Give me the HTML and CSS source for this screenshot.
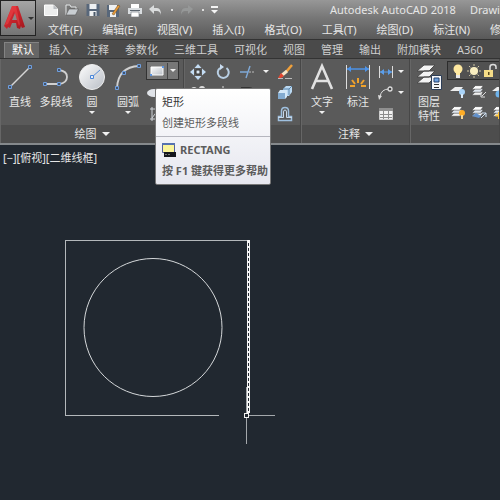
FILE: index.html
```html
<!DOCTYPE html>
<html lang="zh-CN">
<head>
<meta charset="utf-8">
<title>Autodesk AutoCAD 2018</title>
<link rel="stylesheet" href="styles.css">
</head>
<body>
<svg class="defs" aria-hidden="true">
  <defs>
    <linearGradient id="ball" x1="0" y1="0" x2="1" y2="1"><stop offset="0" stop-color="#fdfdfd"/><stop offset="1" stop-color="#b9bec6"/></linearGradient>
    <linearGradient id="red" x1="0" y1="0" x2="1" y2="1"><stop offset="0" stop-color="#e8333a"/><stop offset="1" stop-color="#a3161d"/></linearGradient>
    <symbol id="sheets" viewBox="0 0 16 16">
      <path d="M5 10h9l-3 4H1z" fill="#f2f2f2" stroke="#444" stroke-width=".6"/>
      <path d="M5 6.500h9l-3 4H1z" fill="#dfe6ef" stroke="#444" stroke-width=".6"/>
      <path d="M5 3h9l-3 4H1z" fill="#fff" stroke="#444" stroke-width=".6"/>
    </symbol>
  </defs>
</svg>
<header class="titlebar">
  <button class="app" aria-label="应用程序菜单">
    <svg width="22" height="26" viewBox="0 0 22 26"><path d="M8 1h6l7 21-3 1-1-2-1 3-3-1-1-5H8l-2 5-2-1-1 2-3-3z" fill="url(#red)"/><path d="M8 1L1 20l3-1L10 6l5 15 1-2-4-18z" fill="#f0454a" opacity=".5"/><path d="M11 8l-3 7h5z" fill="#8f8585"/></svg>
    <i class="caret dark"></i>
  </button>
  <div class="bars">
    <div class="quick">
      <button aria-label="新建"><svg width="14" height="12" viewBox="0 0 14 12"><path d="M.500 1h9l4 4v6.500H.500z" fill="#eceded" stroke="#fff"/><path d="M9.500 1v4h4" fill="#b8bcc0"/></svg></button>
      <button aria-label="打开"><svg width="14" height="12" viewBox="0 0 14 12"><path d="M1 11V1h4l1 2h5v2" fill="#777" stroke="#e4e7e8"/><path d="M1 11l3-6h9.500l-3 6z" fill="#c9ced2" stroke="#555" stroke-width=".6"/></svg></button>
      <button aria-label="保存"><svg width="14" height="12" viewBox="0 0 13 12"><path d="M0 0h13v12H0z" fill="#58677a"/><path d="M3 0h7v5H3zM3 7h7v5H3z" fill="#eef0f2"/><path d="M7 8h2v4H7z" fill="#4b5868"/></svg></button>
      <button aria-label="另存为"><svg width="14" height="13" viewBox="0 0 14 13"><path d="M0 1h12v12H0z" fill="#58677a"/><path d="M2 1h8v5H2zM3 8h6v5H3z" fill="#eef0f2"/><path d="M5 10l6-9 2 1-6 9z" fill="#e79a3a" stroke="#6b4a20" stroke-width=".5"/></svg></button>
      <button aria-label="打印"><svg width="14" height="13" viewBox="0 0 14 13"><path d="M3 0h8v4H3z" fill="#fff"/><path d="M0 4h14v6H0z" fill="#d9dde0"/><path d="M2 6h10v1H2z" fill="#5b646e"/><path d="M3 8h8v5H3z" fill="#fff" stroke="#7b838b" stroke-width=".7"/></svg></button>
      <button aria-label="放弃"><svg width="13" height="11" viewBox="0 0 13 11"><path d="M0 4l5-4v3h3q4 0 4 7-1-4-4-4H5v3z" fill="#dadcdd"/></svg><i class="dot"></i></button>
      <button aria-label="重做"><svg width="13" height="11" viewBox="0 0 13 11"><path d="M13 4L8 0v3H5Q1 3 1 10q1-4 4-4h3v3z" fill="#969898"/></svg><i class="dot"></i></button>
      <button aria-label="自定义"><svg width="7" height="8" viewBox="0 0 7 8"><path d="M0 0h7v2H0zM0 4h7L3.500 7.500z" fill="#f4f4f4"/></svg></button>
      <h1>Autodesk AutoCAD 2018<span>Drawing1.dwg</span></h1>
    </div>
    <nav class="menu">
      <a href="#">文件(F)</a><a href="#">编辑(E)</a><a href="#">视图(V)</a><a href="#">插入(I)</a><a href="#">格式(O)</a><a href="#">工具(T)</a><a href="#">绘图(D)</a><a href="#">标注(N)</a><a href="#">修改(M)</a>
    </nav>
  </div>
</header>
<nav class="tabs">
  <a class="on" href="#">默认</a><a href="#">插入</a><a href="#">注释</a><a href="#">参数化</a><a href="#">三维工具</a><a href="#">可视化</a><a href="#">视图</a><a href="#">管理</a><a href="#">输出</a><a href="#">附加模块</a><a href="#">A360</a>
</nav>
<div class="ribbon">
  <section class="panel draw">
    <div class="tools">
      <button class="big"><svg width="28" height="28" viewBox="0 0 28 28"><path d="M4 24L24 4" stroke="#d5d5d5" stroke-width="1.500"/><path d="M2.500 22.500h3v3h-3zM22.500 2.500h3v3h-3z" fill="#44546c" stroke="#6f9fdf"/></svg>直线<i class="caret none"></i></button>
      <button class="big"><svg width="28" height="28" viewBox="0 0 28 28"><path d="M3 21h14q8-1 8-7t-8-7" fill="none" stroke="#d0d0d0" stroke-width="1.800"/><path d="M1.500 19.500h3v3h-3zM15.500 19.500h3v3h-3zM15.500 5.500h3v3h-3z" fill="#44546c" stroke="#6f9fdf"/></svg>多段线<i class="caret none"></i></button>
      <button class="big"><svg width="28" height="28" viewBox="0 0 28 28"><circle cx="14" cy="14" r="12.500" fill="url(#ball)" stroke="#eee"/><path d="M14 14l8-7" stroke="#5b8fd8"/><path d="M12.500 12.500h3v3h-3z" fill="#e6eefa" stroke="#4b86d8"/></svg>圆<i class="caret"></i></button>
      <button class="big"><svg width="28" height="28" viewBox="0 0 28 28"><path d="M3 25Q4 4 25 3" fill="none" stroke="#d0d0d0" stroke-width="1.800"/><path d="M1.500 23.500h3v3h-3zM8.500 8.500h3v3h-3zM23.500 1.500h3v3h-3z" fill="#44546c" stroke="#6f9fdf"/></svg>圆弧<i class="caret"></i></button>
      <div class="stack">
        <button class="split" aria-label="矩形"><span><svg width="14" height="10" viewBox="0 0 14 10"><path d="M1 1h12v8H1z" fill="url(#ball)" stroke="#fff"/><path d="M0 8h2v2H0zM12 0h2v2h-2z" fill="#5c93dd"/></svg></span><i class="caret"></i></button>
        <button aria-label="椭圆"><svg width="16" height="16" viewBox="0 0 16 16"><ellipse cx="8" cy="8" rx="7" ry="4" fill="#e0e3e8"/></svg></button>
        <button aria-label="图案填充"><svg width="16" height="16" viewBox="0 0 16 16"><path d="M6 1v14M4 3h11M4 13h11M12 1v14M6 12l6-8" stroke="#cfd3d8" fill="none"/></svg></button>
      </div>
    </div>
    <button class="name">绘图<i class="caret wide"></i></button>
  </section>
  <section class="panel modify">
    <div class="tools">
      <div class="grid">
        <button aria-label="移动"><svg width="16" height="16" viewBox="0 0 16 16"><path d="M8 0l3.500 4h-7zM8 16l3.500-4h-7zM0 8l4-3.500v7zM16 8l-4-3.500v7z" fill="#c3dcf3"/><path d="M6 6h4v4H6z" fill="#dce9f5" stroke="#333"/></svg></button>
        <button aria-label="旋转"><svg width="16" height="16" viewBox="0 0 16 16"><path d="M5 4a5.500 5.500 0 1 0 6.500 0" fill="none" stroke="#b9cfe4" stroke-width="2"/><path d="M5 0l4 3-4 3z" fill="#c9dcf0"/></svg></button>
        <button aria-label="修剪"><svg width="16" height="16" viewBox="0 0 16 16"><path d="M0 8h8M6 14l4-12" stroke="#7fa9d8" stroke-width="1.400"/><path d="M9 8h6" stroke="#bbb" stroke-dasharray="2 1"/></svg></button>
        <i class="caret"></i>
        <button aria-label="删除"><svg width="16" height="16" viewBox="0 0 16 16"><path d="M15 1l-6 7" stroke="#f1a13b" stroke-width="2.500"/><path d="M10 7L4 12" stroke="#f5e4c8" stroke-width="3"/><path d="M4 9l3 3-3 2H1z" fill="#e3452f"/><path d="M1 14.500h5M8 14.500h7" stroke="#bbb"/></svg></button>
        <button aria-label="复制"><svg width="16" height="16" viewBox="0 0 16 16"><circle cx="4" cy="5" r="3" fill="#ddd"/><circle cx="12" cy="4" r="3" fill="#ddd"/></svg></button>
        <button aria-label="镜像"><svg width="16" height="16" viewBox="0 0 16 16"><path d="M8 1v14M2 13l4-7v7zM14 13l-4-7v7z" stroke="#ddd" fill="none"/></svg></button>
        <button aria-label="圆角"><svg width="16" height="16" viewBox="0 0 16 16"><path d="M1 3h8q5 0 6 8" stroke="#333" stroke-width="2" fill="none"/></svg></button>
        <i></i>
        <button aria-label="分解"><svg width="16" height="16" viewBox="0 0 16 16"><path d="M6 4l3-3h6v6l-3 4H6z" fill="#b9d8f2"/><path d="M6 4h6v6M12 4l3-3" stroke="#5d87ac" fill="none"/><path d="M1 8l2-3h7v7l-2 2V8z" fill="#d4e8f8"/><path d="M1 8h7v6H1z" fill="#83abd0"/></svg></button>
        <button aria-label="拉伸"></button>
        <button aria-label="缩放"></button>
        <button aria-label="阵列"></button>
        <i></i>
        <button aria-label="偏移"><svg width="16" height="16" viewBox="0 0 16 16"><path d="M1.500 14.500v-4h3V5q0-3.500 3.500-3.500T11.500 5v5.500h3v4z" fill="none" stroke="#9fc0df" stroke-width="1.500"/><path d="M1 11.500h5.500V6q0-2 1.500-2t1.500 2v5.500H15" fill="none" stroke="#c8d9ea"/></svg></button>
      </div>
    </div>
    <button class="name" aria-label="修改"></button>
  </section>
  <section class="panel note">
    <div class="tools">
      <button class="big"><svg width="28" height="28" viewBox="0 0 28 28"><path d="M4 26L14 3l10 23M8 18h12" fill="none" stroke="#e1e1e1" stroke-width="2.600"/></svg>文字<i class="caret"></i></button>
      <button class="big"><svg width="28" height="28" viewBox="0 0 28 28"><path d="M2.500 2v24M25.500 2v24" stroke="#ddd"/><path d="M3 6h22" stroke="#4d93e8" stroke-width="1.500"/><path d="M3 6l4-3v6zM25 6l-4-3v6z" fill="#4d93e8"/><path d="M14 15v5M8 17l3 4M20 17l-3 4M6 23h5M22 23h-5" stroke="#f0a22c" stroke-width="2"/></svg>标注<i class="caret none"></i></button>
      <div class="pairs">
        <button aria-label="线性"><svg width="16" height="16" viewBox="0 0 16 16"><path d="M1.500 2v12M14.500 2v12" stroke="#ddd"/><path d="M2 8h12" stroke="#5b9eea"/><path d="M2 8l4-3v6zM14 8l-4-3v6z" fill="#5b9eea"/></svg></button><i class="caret"></i>
        <button aria-label="引线"><svg width="16" height="16" viewBox="0 0 16 16"><path d="M2 12q1-8 9-8" fill="none" stroke="#ddd"/><path d="M0 10l4 1-3 4z" fill="#ddd"/><circle cx="12" cy="4" r="2" fill="#444" stroke="#ddd" stroke-width="1.300"/></svg></button><i class="caret"></i>
        <button aria-label="表格"><svg width="16" height="16" viewBox="0 0 16 16"><path d="M1.500 2.500h13v11h-13z" fill="#f2f2f2" stroke="#ccc"/><path d="M1 2h14v3H1z" fill="#8f8f8f"/><path d="M2 8.500h12M2 11.500h12M5.500 5v8M10.500 5v8" stroke="#8d8d8d"/></svg></button>
      </div>
    </div>
    <button class="name">注释<i class="caret wide"></i></button>
  </section>
  <section class="panel layers">
    <div class="tools">
      <button class="big"><svg width="28" height="28" viewBox="0 0 28 28"><path d="M9 14h11l-6 6H2zM9 8h11l-6 6H2zM9 2h11l-6 6H2z" fill="#f3f3f3" stroke="#4a4a4a"/><path d="M16.500 12.500h10v14h-10z" fill="#f6f7f9" stroke="#2d3e57"/><path d="M19 15h5v4h-5z" fill="#6fa2e0" stroke="#24406c"/><path d="M19 21.500h5M19 24.500h5" stroke="#333"/></svg>图层<br>特性</button>
      <div class="side">
        <button class="combo" aria-label="图层">
          <svg width="16" height="16" viewBox="0 0 16 16"><circle cx="8" cy="6" r="4.500" fill="#ffe9a0"/><path d="M6 9h4v3H6z" fill="#ffe9a0"/><path d="M6 12h4v3H6z" fill="#e8e8e8"/></svg>
          <svg width="16" height="16" viewBox="0 0 16 16"><path d="M8 1v14M1 8h14M3 3l10 10M13 3L3 13" stroke="#cfc6a2" stroke-dasharray="2 1"/><circle cx="8" cy="8" r="4" fill="#f9eec0"/></svg>
          <svg width="16" height="16" viewBox="0 0 16 16"><path d="M8 8V4q0-2.500 3-2.500T14 4v2" fill="none" stroke="#ddd" stroke-width="1.500"/><path d="M2 7h9v7H2z" fill="#f5dc87"/><path d="M6 9h1.500v3H6z" fill="#5a4a20"/></svg>
        </button>
        <div class="row">
          <button aria-label="关闭图层"><svg width="16" height="16" viewBox="0 0 16 16"><path d="M5 4h8l-3 4H0z" fill="#eee"/><circle cx="12" cy="9" r="3" fill="#a9d3f8"/><path d="M11 11h2v4h-2z" fill="#d9eafa"/></svg></button>
          <button aria-label="隔离图层"><svg width="16" height="16" viewBox="0 0 16 16"><use href="#sheets" width="14" height="14"/><path d="M15 9l-4 4M10 10v4h4" stroke="#ddd" fill="none"/></svg></button>
          <button aria-label="冻结图层"><svg width="16" height="16" viewBox="0 0 16 16"><path d="M5 4h8l-3 4H0z" fill="#eee"/><circle cx="7" cy="11" r="3.500" fill="#6eb2ea"/></svg></button>
        </div>
        <div class="row">
          <button aria-label="打开图层"><svg width="16" height="16" viewBox="0 0 16 16"><use href="#sheets" width="14" height="14"/><circle cx="12" cy="9" r="3" fill="#ffad25"/><path d="M11 11h2v4h-2z" fill="#f5d693"/></svg></button>
          <button aria-label="取消隔离"><svg width="16" height="16" viewBox="0 0 16 16"><use href="#sheets" width="14" height="14"/><path d="M1 12l4-3 5 3-2 2z" fill="#6290c9"/><path d="M10 14l5-5M11 9h4v4" stroke="#cfe0f2" fill="none"/></svg></button>
          <button aria-label="解冻图层"><svg width="16" height="16" viewBox="0 0 16 16"><use href="#sheets" width="14" height="14"/><path d="M7 8v7M3.500 11.500h7" stroke="#ffc53a" stroke-width="2"/></svg></button>
        </div>
      </div>
    </div>
    <button class="name" aria-label="图层面板"></button>
  </section>
  <div class="tip" role="tooltip">
    <div class="about"><strong>矩形</strong><p>创建矩形多段线</p></div>
    <div class="help">
      <p class="cmd"><svg width="14" height="14" viewBox="0 0 14 14"><path d="M.500.500h12v9H.500z" fill="#fbf59a" stroke="#56629a"/><path d="M0 0h13v2H0z" fill="#5672b0"/><path d="M2 9h12v5H2z" fill="#15171d"/><path d="M3 11.500h6" stroke="#777" stroke-dasharray="2 1"/></svg><b>RECTANG</b></p>
      <p><b>按 F1 键获得更多帮助</b></p>
    </div>
  </div>
</div>
<main class="canvas">
  <p class="view">[−][俯视][二维线框]</p>
  <svg class="drawing" width="300" height="320" viewBox="0 145 300 320" fill="none" stroke="#b4b8bb" shape-rendering="crispEdges">
    <path d="M219 415.500H65.500v-175H248"/>
    <circle cx="153" cy="327.500" r="69" stroke="#d5d8da" shape-rendering="auto"/>
    <path d="M248.500 240v173" stroke="#f6f6f6" stroke-width="3"/>
    <path d="M248.500 243v168" stroke="#22282f" stroke-dasharray="3 2"/>
    <path d="M246.500 387v26M246.500 418v26M249 415.500h26" stroke="#a4a8ac"/>
    <path d="M244.500 413.500h4v4h-4z" stroke="#f2f2f2"/>
  </svg>
</main>
</body>
</html>
```

FILE: styles.css
```css
* { box-sizing: border-box; }
body {
  margin: 0;
  min-height: 100vh;
  display: flex;
  flex-direction: column;
  overflow: hidden;
  background: #212830;
  color: #e6e6e6;
  font: 11px/14px "Noto Sans", "Noto Sans CJK SC", sans-serif;
}
button {
  margin: 0;
  padding: 0;
  border: 0;
  background: none;
  color: inherit;
  font: inherit;
}
a { color: inherit; text-decoration: none; }
p, h1 { margin: 0; }
svg { display: block; flex: none; }
.defs { position: absolute; width: 0; height: 0; }

.caret {
  border: 3px solid transparent;
  border-top: 3px solid #f0f0f0;
  border-bottom: 0;
  width: 6px;
  height: 3px;
  flex: none;
}
.caret.wide { border-width: 4px 4px 0; width: 8px; height: 4px; }
.caret.dark { border-top-color: #333; }
.caret.none { visibility: hidden; }
.dot { flex: none; width: 2px; height: 2px; background: #ddd; }

.titlebar {
  display: flex;
  height: 40px;
  overflow: hidden;
  background: linear-gradient(#979797, #777 45%, #595959);
  border-bottom: 1px solid #333;
}
.app {
  display: flex;
  align-items: center;
  gap: 2px;
  width: 36px;
  height: 36px;
  padding-left: 3px;
  flex: none;
  border: 1px solid #222;
  background: linear-gradient(#a5a5a5, #747474);
}
.bars { flex: 1; min-width: 0; }
.quick {
  display: flex;
  align-items: center;
  gap: 7px;
  height: 20px;
  padding-left: 8px;
}
.quick button { display: flex; align-items: center; gap: 9px; flex: none; }
.quick h1 {
  margin-left: 105px;
  font-size: 11px;
  font-weight: 400;
  white-space: nowrap;
}
.quick h1 span { margin-left: 14px; }
.menu {
  display: flex;
  gap: 20px;
  padding: 3px 0 0 12px;
  white-space: nowrap;
}

.tabs {
  display: flex;
  gap: 16px;
  height: 19px;
  padding: 2px 0 0 4px;
  overflow: hidden;
  background: #4a4a4a;
  border-bottom: 1px solid #333;
  color: #cfcfcf;
  line-height: 16px;
  white-space: nowrap;
  flex: none;
}
.tabs .on {
  margin-right: -6px;
  padding: 0 5px 0 7px;
  background: #666;
  border: 1px solid #838383;
  border-width: 1px 0 0 1px;
  line-height: 14px;
  color: #fff;
}

.ribbon {
  position: relative;
  display: flex;
  height: 86px;
  flex: none;
  background: #5a5a5a;
  border-bottom: 2px solid #85898c;
}
.panel {
  display: flex;
  flex-direction: column;
  flex: none;
  border-right: 1px solid #474747;
  border-left: 1px solid #666;
}
.layers { flex: 1; min-width: 0; overflow: hidden; }
.tools { display: flex; flex: 1; padding-top: 2px; }
.name {
  display: flex;
  align-items: center;
  justify-content: center;
  gap: 5px;
  height: 18px;
  background: #4d4d4d;
}
.big {
  display: flex;
  flex-direction: column;
  align-items: center;
  align-self: flex-start;
  flex: none;
  padding-top: 2px;
  width: 36px;
}
.big svg { margin-bottom: 4px; }
.big .caret { margin-top: 2px; }
.stack, .side { display: flex; flex-direction: column; }
.stack button { height: 21px; }
.stack .split {
  display: flex;
  align-items: center;
  height: 19px;
  margin-bottom: 2px;
  border: 1px solid #333;
  background: #777;
}
.split span { padding: 3px; border-right: 1px solid #444; }
.split .caret { margin: 0 2px; }
.draw { width: 184px; }
.draw .tools { padding-left: 1px; }
.modify { width: 117px; }
.grid {
  display: grid;
  grid-template-columns: 25px 25px 25px 12px 26px;
  grid-auto-rows: 21px;
  align-items: center;
  justify-items: center;
}
.note { width: 109px; }
.note .tools { padding-left: 2px; }
.pairs {
  display: grid;
  grid-template-columns: 20px 10px;
  grid-auto-rows: 21px;
  align-items: center;
  justify-items: center;
}
.side { flex: 1; }
.combo {
  display: flex;
  align-items: center;
  height: 19px;
  padding-left: 2px;
  border: 1px solid #2c2c2c;
  background: #515151;
}
.row { display: flex; gap: 5px; height: 21px; padding-left: 3px; align-items: center; }

.tip {
  position: absolute;
  left: 155px;
  top: 29px;
  z-index: 2;
  border: 1px solid #777;
  border-radius: 2px;
  background: linear-gradient(#fff, #e6e7ef);
  color: #5c5c5c;
  white-space: nowrap;
}
.tip > div { padding: 6px 2px 6px 6px; }
.tip strong { font-weight: 400; color: #333; }
.tip p { margin-top: 7px; }
.tip .help { border-top: 1px solid #b5b6be; }
.tip .cmd { display: flex; align-items: center; gap: 4px; margin: 0; }

.canvas { position: relative; flex: 1; }
.view { padding: 6px 3px; }
.drawing { position: absolute; left: 0; top: 0; }
```
